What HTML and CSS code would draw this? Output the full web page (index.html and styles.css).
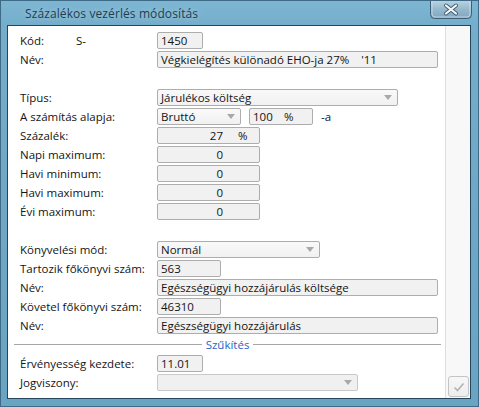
FILE: index.html
```html
<!DOCTYPE html>
<html>
<head>
<meta charset="utf-8">
<link rel="stylesheet" href="styles.css">
</head>
<body>
<div class="window">
  <div class="titlebar">
    <span class="title">Százalékos vezérlés módosítás</span>
    <div class="close">
      <svg width="42" height="18" viewBox="0 0 42 18">
        <defs>
          <linearGradient id="cg" x1="0" y1="0" x2="0" y2="1">
            <stop offset="0" stop-color="#b9d2e0"/>
            <stop offset="0.5" stop-color="#94b7cc"/>
            <stop offset="1" stop-color="#7fa6be"/>
          </linearGradient>
        </defs>
        <path d="M0.5 0 V13.5 Q0.5 17.5 4.5 17.5 H37.5 Q41.5 17.5 41.5 13.5 V0" fill="url(#cg)" stroke="#3d5f77" stroke-width="1"/>
        <path d="M2 0 V13 Q2 16 5 16 H37 Q40 16 40 13 V0" fill="none" stroke="#d5e4ee" stroke-width="1" opacity="0.7"/>
        <path d="M16 4.5 L26 12.5 M26 4.5 L16 12.5" stroke="#3e5a6e" stroke-width="4" stroke-linecap="round"/>
        <path d="M16 4.5 L26 12.5 M26 4.5 L16 12.5" stroke="#f4f8fb" stroke-width="2.2" stroke-linecap="round"/>
      </svg>
    </div>
  </div>
  <div class="client">
    <div class="panel">
      <div class="form">
        <div class="label">Kód:<span class="prefix">S-</span></div>
        <div class="field"><div class="box w46">1450</div></div>

        <div class="label">Név:</div>
        <div class="field"><div class="box w281 pre">Végkielégítés különadó EHO-ja 27%    '11</div></div>

        <div class="spacer"></div>

        <div class="label">Típus:</div>
        <div class="field"><div class="box select w241"><span>Járulékos költség</span><span class="arrow"></span></div></div>

        <div class="label">A számítás alapja:</div>
        <div class="field">
          <div class="box select w84"><span>Bruttó</span><span class="arrow"></span></div>
          <div class="box w64 pct gap8"><span class="v100">100</span><span>%</span></div>
          <span class="suffix">-a</span>
        </div>

        <div class="label">Százalék:</div>
        <div class="field"><div class="box num w103"><span class="val">27</span><span class="unit">%</span></div></div>

        <div class="label">Napi maximum:</div>
        <div class="field"><div class="box num w103"><span class="val">0</span><span class="unit"></span></div></div>

        <div class="label">Havi minimum:</div>
        <div class="field"><div class="box num w103"><span class="val">0</span><span class="unit"></span></div></div>

        <div class="label">Havi maximum:</div>
        <div class="field"><div class="box num w103"><span class="val">0</span><span class="unit"></span></div></div>

        <div class="label">Évi maximum:</div>
        <div class="field"><div class="box num w103"><span class="val">0</span><span class="unit"></span></div></div>

        <div class="spacer"></div>

        <div class="label">Könyvelési mód:</div>
        <div class="field"><div class="box select w163"><span>Normál</span><span class="arrow"></span></div></div>

        <div class="label">Tartozik főkönyvi szám:</div>
        <div class="field"><div class="box w64">563</div></div>

        <div class="label">Név:</div>
        <div class="field"><div class="box w281">Egészségügyi hozzájárulás költsége</div></div>

        <div class="label">Követel főkönyvi szám:</div>
        <div class="field"><div class="box w64">46310</div></div>

        <div class="label">Név:</div>
        <div class="field"><div class="box w281">Egészségügyi hozzájárulás</div></div>

        <div class="separator"><span class="line"></span><span class="septext">Szűkítés</span><span class="line"></span></div>

        <div class="label">Érvényesség kezdete:</div>
        <div class="field"><div class="box w46">11.01</div></div>

        <div class="label">Jogviszony:</div>
        <div class="field"><div class="box select disabled w201"><span></span><span class="arrow"></span></div></div>
      </div>
    </div>
    <div class="side">
      <div class="okbtn">
        <svg width="12" height="10" viewBox="0 0 12 10"><path d="M1.5 5.5 L4.5 8.5 L10.5 1.5" fill="none" stroke="#b4b4b4" stroke-width="1.6"/></svg>
      </div>
    </div>
  </div>
</div>
</body>
</html>
```
FILE: styles.css
```css
html, body {
  margin: 0;
  padding: 0;
}
body {
  width: 479px;
  height: 407px;
  overflow: hidden;
  font-family: "Open Sans", "Noto Sans", sans-serif;
}
.window {
  width: 479px;
  height: 407px;
  box-sizing: border-box;
  border: 1px solid #3f6a86;
  background: linear-gradient(to bottom, #7db6d2 0px, #74aecb 24px, #6ea8c6 200px, #6aa4c3 100%);
  display: flex;
  flex-direction: column;
}
.titlebar {
  height: 24px;
  display: flex;
  align-items: flex-start;
  flex-shrink: 0;
}
.title {
  margin-left: 24px;
  margin-top: 4px;
  font-size: 12px;
  color: #1f3d52;
  text-shadow: 0 0 6px rgba(255,255,255,0.45);
  letter-spacing: 0.1px;
}
.close {
  margin-left: auto;
  margin-right: 6px;
  height: 18px;
  line-height: 0;
}
.client {
  margin: 0 7px 7px 6px;
  flex: 1;
  border: 1px solid #24455c;
  background: #f8f8f8;
  display: flex;
}
.panel {
  width: 438px;
  background: #ffffff;
  border-right: 1px solid #dedede;
  padding: 6px 0 0 12px;
  box-sizing: border-box;
  flex-shrink: 0;
}
.side {
  flex: 1;
  display: flex;
  align-items: flex-end;
  padding: 0 0 1px 2px;
}
.okbtn {
  width: 19px;
  height: 19px;
  border: 1px solid #c4c4c4;
  border-radius: 3px;
  background: linear-gradient(#f7f7f7, #eeeeee);
  display: flex;
  align-items: center;
  justify-content: center;
}
.form {
  display: grid;
  grid-template-columns: 137px 1fr;
  grid-auto-rows: 17px;
  row-gap: 2px;
  font-size: 11.5px;
  color: #141414;
}
.label {
  display: flex;
  align-items: center;
  white-space: nowrap;
}
.prefix {
  margin-left: 32px;
}
.field {
  display: flex;
  align-items: stretch;
}
.spacer {
  grid-column: 1 / 3;
}
.box {
  box-sizing: border-box;
  height: 17px;
  border: 1px solid #adadad;
  border-radius: 2px;
  background: #f1f1f1;
  padding: 0 3px;
  display: flex;
  align-items: center;
  white-space: nowrap;
  overflow: hidden;
}
.pre { white-space: pre; }
.select {
  background: linear-gradient(#f9f9f9, #f1f1f1);
  justify-content: space-between;
}
.select.disabled {
  border-color: #c9c9c9;
  background: #f0f0f0;
}
.arrow {
  width: 0;
  height: 0;
  border-left: 4px solid transparent;
  border-right: 4px solid transparent;
  border-top: 5px solid #a9a9a9;
  margin-right: 2px;
}
.num .val {
  flex: 1;
  text-align: right;
}
.num .unit {
  width: 18px;
  margin-left: 15px;
}
.v100 { width: 31px; }
.gap8 { margin-left: 8px; }
.suffix {
  margin-left: 8px;
  display: flex;
  align-items: center;
}
.w46 { width: 46px; }
.w64 { width: 64px; }
.w84 { width: 84px; }
.w103 { width: 103px; }
.w163 { width: 163px; }
.w201 { width: 201px; }
.w241 { width: 241px; }
.w281 { width: 281px; }
.separator {
  grid-column: 1 / 3;
  display: flex;
  align-items: center;
  margin-left: -6px;
  margin-right: 4px;
}
.separator .line {
  flex: 1;
  height: 1px;
  background: #a6a6a6;
}
.septext {
  color: #2b5fc9;
  padding: 0 4px 0 4px;
}
```
